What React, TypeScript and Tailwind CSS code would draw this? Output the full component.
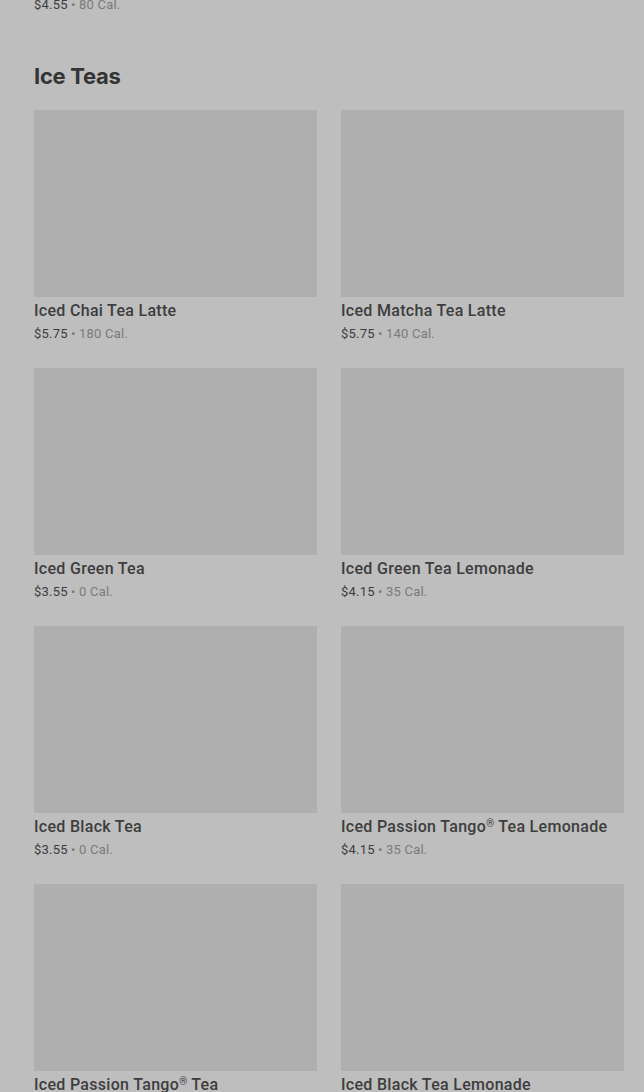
const items = [
  { name: 'Iced Chai Tea Latte', price: '$5.75', cal: '180 Cal.' },
  { name: 'Iced Matcha Tea Latte', price: '$5.75', cal: '140 Cal.' },
  { name: 'Iced Green Tea', price: '$3.55', cal: '0 Cal.' },
  { name: 'Iced Green Tea Lemonade', price: '$4.15', cal: '35 Cal.' },
  { name: 'Iced Black Tea', price: '$3.55', cal: '0 Cal.' },
  { name: 'Iced Passion Tango® Tea Lemonade', price: '$4.15', cal: '35 Cal.' },
  { name: 'Iced Passion Tango® Tea', price: '$3.55', cal: '0 Cal.' },
  { name: 'Iced Black Tea Lemonade', price: '$4.15', cal: '35 Cal.' },
];

function PriceLine({ price, cal }: { price: string; cal: string }) {
  return (
    <p className="text-[13px] leading-[21px] tracking-[0.2px]" style={{ fontFamily: 'Roboto, "Noto Sans", sans-serif' }}>
      <span className="text-[#3d3d3d]">{price}</span>
      <span className="text-[#7a7a7a]"> • {cal}</span>
    </p>
  );
}

// small raised ® like the menu uses
function ProductName({ name }: { name: string }) {
  const parts = name.split('®');
  return (
    <>
      {parts.map((part, i) => (
        <span key={i}>
          {part}
          {i < parts.length - 1 && <span className="relative -top-[5px] text-[10px] leading-[0]">®</span>}
        </span>
      ))}
    </>
  );
}

export default function App() {
  return (
    <div
      className="h-[1092px] overflow-hidden bg-[#bebebe] pl-[34px] pr-[20px]"
      style={{ fontFamily: 'Inter, "Noto Sans", sans-serif' }}
    >
      <div className="-mt-[6px]">
        <PriceLine price="$4.55" cal="80 Cal." />
      </div>

      <h2 className="mt-[47px] text-[22px] leading-[28px] font-bold tracking-[-0.3px] text-[#343434]">
        Ice Teas
      </h2>

      <div className="mt-[20px] grid grid-cols-2 gap-x-[24px] gap-y-[24px]">
        {items.map((item) => (
          <div key={item.name}>
            <div className="h-[187px] bg-[#afafaf]"></div>
            <h3
              className="mt-[2px] h-[24px] text-[16px] leading-[24px] font-medium text-[#3d3d3d] tracking-[0.3px]"
              style={{ fontFamily: 'Roboto, "Noto Sans", sans-serif' }}
            >
              <ProductName name={item.name} />
            </h3>
            <PriceLine price={item.price} cal={item.cal} />
          </div>
        ))}
      </div>
    </div>
  );
}
